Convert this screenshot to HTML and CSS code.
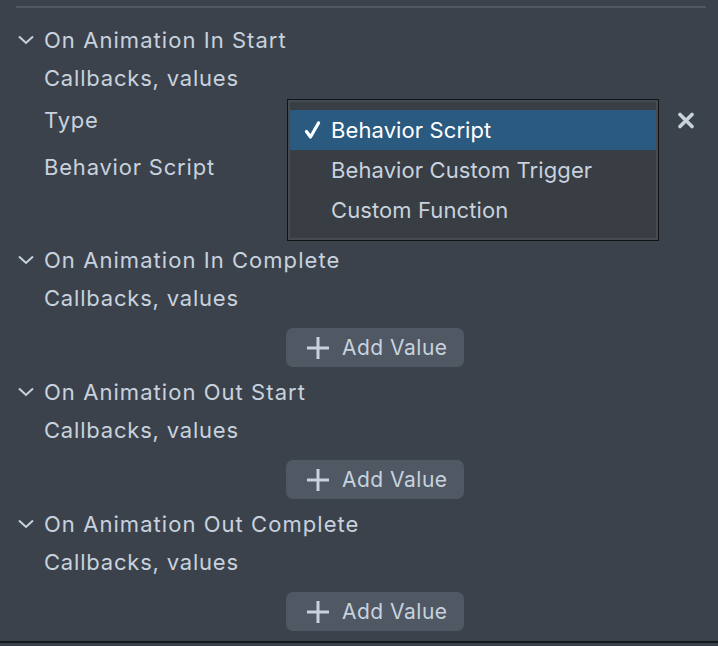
FILE: index.html
```html
<!DOCTYPE html>
<html lang="en">

<head>
    <title>Animation Callbacks</title>
    <meta charset="utf-8">
    <meta name="viewport" content="width=device-width, initial-scale=1">
    <link rel="stylesheet" href="styles.css">
</head>

<body>
    <div class="panel">
        <div class="rule"></div>

        <div class="event event-first">
            <div class="event-head">
                <svg class="chevron" width="18" height="10" viewBox="0 0 18 10"><path d="M2 1.5 L9 8 L16 1.5" /></svg>
                <span>On Animation In Start</span>
            </div>
            <div class="row"><span class="label">Callbacks, values</span></div>
            <div class="row row-type">
                <span class="label">Type</span>
                <div class="value">
                    <ul class="menu">
                        <li class="selected">
                            <svg class="check" width="17" height="18" viewBox="0 0 17 18"><path d="M2.5 10.5 L6.5 16 L14.5 2" /></svg>
                            Behavior Script
                        </li>
                        <li>Behavior Custom Trigger</li>
                        <li>Custom Function</li>
                    </ul>
                </div>
                <button class="remove">
                    <svg width="18" height="17" viewBox="0 0 18 17"><path d="M3 2.5 L15 14.5 M15 2.5 L3 14.5" /></svg>
                </button>
            </div>
            <div class="row row-script"><span class="label">Behavior Script</span></div>
        </div>

        <div class="event">
            <div class="event-head">
                <svg class="chevron" width="18" height="10" viewBox="0 0 18 10"><path d="M2 1.5 L9 8 L16 1.5" /></svg>
                <span>On Animation In Complete</span>
            </div>
            <div class="row"><span class="label">Callbacks, values</span></div>
            <div class="row-button">
                <button class="add">
                    <svg width="24" height="24" viewBox="0 0 24 24"><path d="M12 1 V23 M1 12 H23" /></svg>
                    Add Value
                </button>
            </div>
        </div>

        <div class="event">
            <div class="event-head">
                <svg class="chevron" width="18" height="10" viewBox="0 0 18 10"><path d="M2 1.5 L9 8 L16 1.5" /></svg>
                <span>On Animation Out Start</span>
            </div>
            <div class="row"><span class="label">Callbacks, values</span></div>
            <div class="row-button">
                <button class="add">
                    <svg width="24" height="24" viewBox="0 0 24 24"><path d="M12 1 V23 M1 12 H23" /></svg>
                    Add Value
                </button>
            </div>
        </div>

        <div class="event">
            <div class="event-head">
                <svg class="chevron" width="18" height="10" viewBox="0 0 18 10"><path d="M2 1.5 L9 8 L16 1.5" /></svg>
                <span>On Animation Out Complete</span>
            </div>
            <div class="row"><span class="label">Callbacks, values</span></div>
            <div class="row-button">
                <button class="add">
                    <svg width="24" height="24" viewBox="0 0 24 24"><path d="M12 1 V23 M1 12 H23" /></svg>
                    Add Value
                </button>
            </div>
        </div>
    </div>
    <div class="bottom-bar"></div>
</body>

</html>
```

FILE: styles.css
```css
* {
    margin: 0;
    padding: 0;
    box-sizing: border-box;
}

body {
    background-color: #3c424b;
    color: #c7d2de;
    font-family: Inter, "Noto Sans", sans-serif;
    font-size: 22px;
    letter-spacing: 0.8px;
    height: 646px;
    overflow: hidden;
}

.panel {
    height: 641px;
    padding: 6px 12px 0 16px;
}

.rule {
    height: 2px;
    background-color: #51565f;
    margin-bottom: 13px;
}

.event {
    padding-bottom: 6px;
}

.event-first {
    padding-bottom: 50px;
}

.event-head {
    height: 38px;
    display: flex;
    align-items: center;
    gap: 9px;
    padding-left: 1px;
    letter-spacing: 1.05px;
}

.chevron path {
    fill: none;
    stroke: #c7d2de;
    stroke-width: 2;
}

.row {
    height: 38px;
    display: grid;
    grid-template-columns: 270px 1fr auto;
    align-items: center;
}

.row .label {
    padding-left: 28px;
    white-space: nowrap;
}

.row-type {
    height: 46px;
}

.row-script {
    height: 48px;
}

.value {
    position: relative;
    height: 100%;
}

/* popup menu over the type select */
.menu {
    position: absolute;
    top: 2px;
    left: 1px;
    width: 372px;
    height: 142px;
    list-style: none;
    background-color: #393d44;
    border: 1px solid #111316;
    box-shadow: inset 0 0 0 2px #464a51;
    padding: 10px 2px;
    z-index: 2;
    letter-spacing: 0.1px;
}

.menu li {
    height: 40px;
    display: flex;
    align-items: center;
    padding-left: 41px;
    color: #c7d2de;
}

.menu li.selected {
    background-color: #2a5a80;
    color: #fff;
    padding-left: 14px;
    gap: 10px;
}

.check path {
    fill: none;
    stroke: #fff;
    stroke-width: 3.2;
    stroke-linecap: round;
    stroke-linejoin: round;
}

.remove {
    background: none;
    border: none;
    margin-right: 11px;
    display: flex;
}

.remove path {
    stroke: #c7d2de;
    stroke-width: 3.6;
    stroke-linecap: round;
}

.row-button {
    margin-top: 11px;
    padding-left: 270px;
}

.add {
    height: 39px;
    width: 178px;
    display: flex;
    align-items: center;
    gap: 12px;
    padding-left: 20px;
    background-color: #4f5863;
    border: none;
    border-radius: 7px;
    color: #c7d2de;
    font-family: inherit;
    font-size: 21px;
    letter-spacing: 0.5px;
}

.add path {
    stroke: #c7d2de;
    stroke-width: 3;
}

.bottom-bar {
    height: 5px;
    border-top: 2px solid #15181c;
    background-color: #3a4049;
}
```
